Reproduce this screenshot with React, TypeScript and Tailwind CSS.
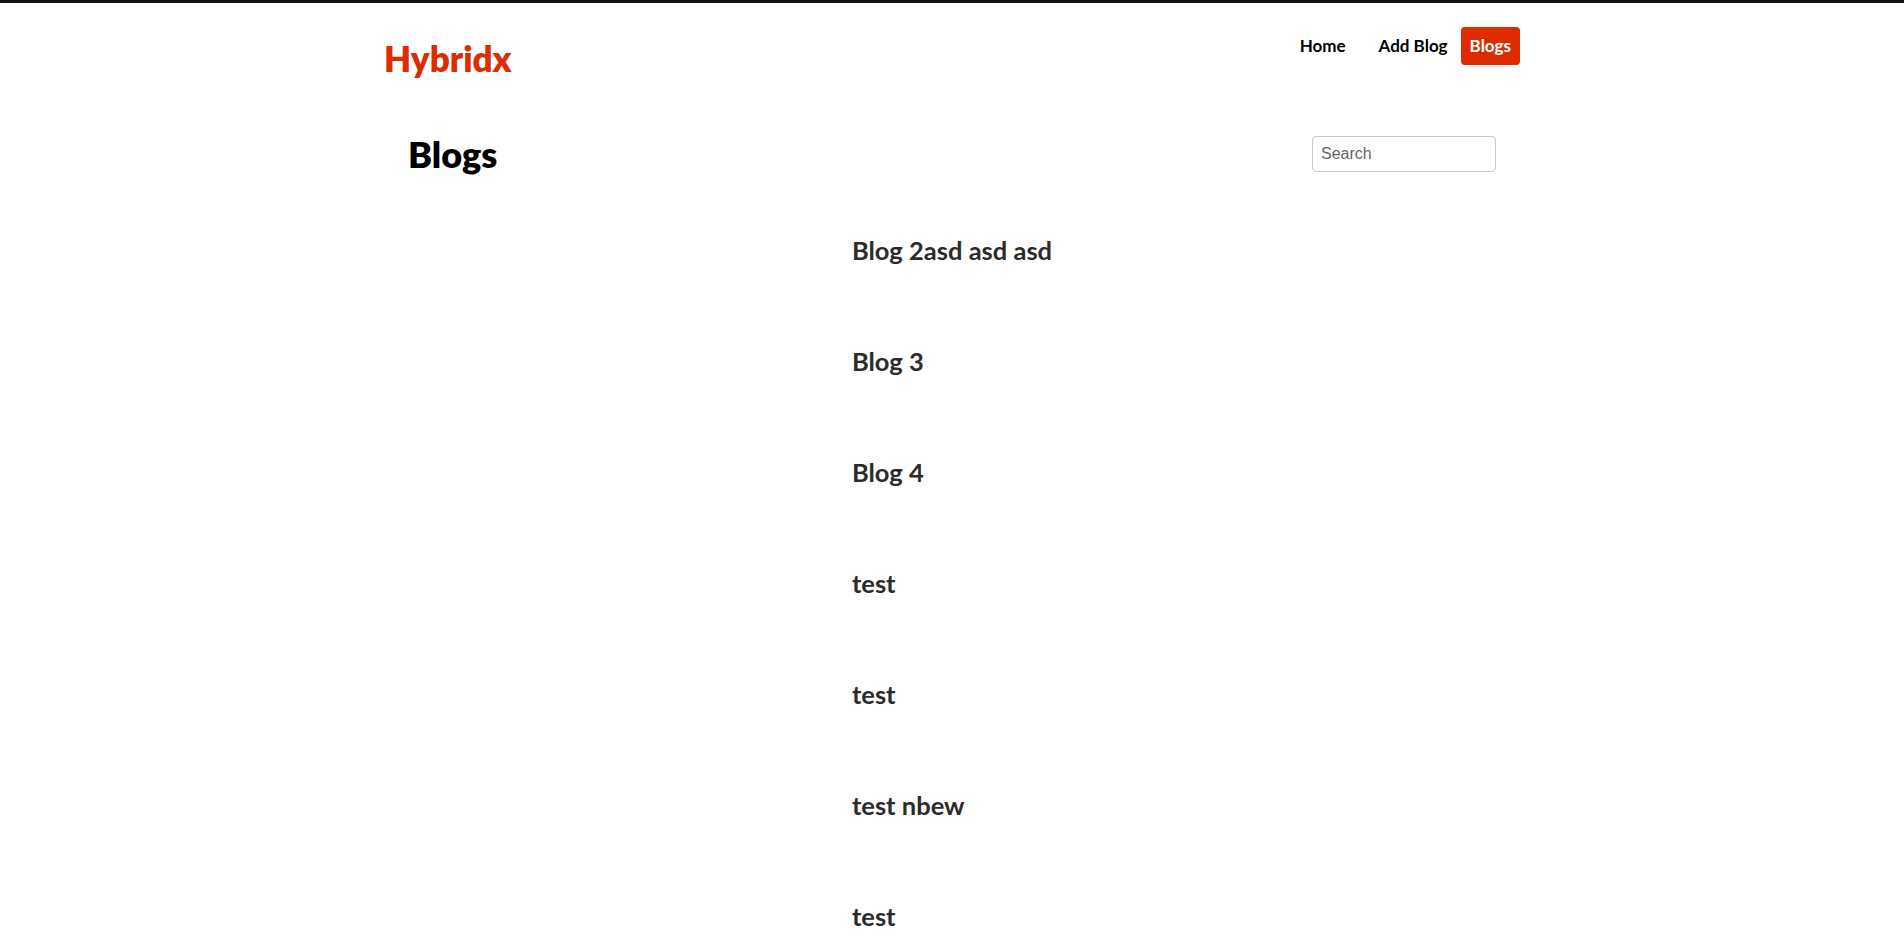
const blogs = ['Blog 2asd asd asd', 'Blog 3', 'Blog 4', 'test', 'test', 'test nbew', 'test', 'test', 'test']

function Header() {
  return (
    <header className="mx-auto flex max-w-[1136px] items-start justify-between pt-[24px]">
      <a href="#" className="mt-[14px] text-[35px] font-extrabold leading-none text-[#dd2c00]">
        Hybridx
      </a>
      <nav className="flex items-center text-[17px] font-bold text-black">
        <a href="#" className="px-2 py-[6px]">Home</a>
        <a href="#" className="ml-[17px] px-2 py-[6px]">Add Blog</a>
        <a href="#" className="ml-[5px] rounded-[4px] bg-[#dd2c00] px-[9px] py-[6px] text-white">Blogs</a>
      </nav>
    </header>
  )
}

export default function App() {
  return (
    <div className="min-h-screen overflow-hidden bg-white font-['Lato',sans-serif]">
      <div className="h-[3px] bg-[#111]" />
      <Header />
      <main className="mx-auto max-w-[1136px] px-6">
        <div className="mt-[60px] flex items-center justify-between">
          <h1 className="text-[36px] font-extrabold leading-none text-black">Blogs</h1>
          <input
            type="text"
            placeholder="Search"
            className="h-[36px] w-[184px] rounded-[4px] border border-[#c8c8c8] px-2 font-['Liberation_Sans',sans-serif] text-[16px] text-[#333] placeholder:text-[#666] outline-none"
          />
        </div>
        <ul className="mx-auto mt-[66px] w-fit">
          {blogs.map((b, i) => (
            <li key={i} className="h-[111px]">
              <a href="#" className="text-[25.5px] font-bold leading-none text-[#2b2b2b]">{b}</a>
            </li>
          ))}
        </ul>
      </main>
    </div>
  )
}
